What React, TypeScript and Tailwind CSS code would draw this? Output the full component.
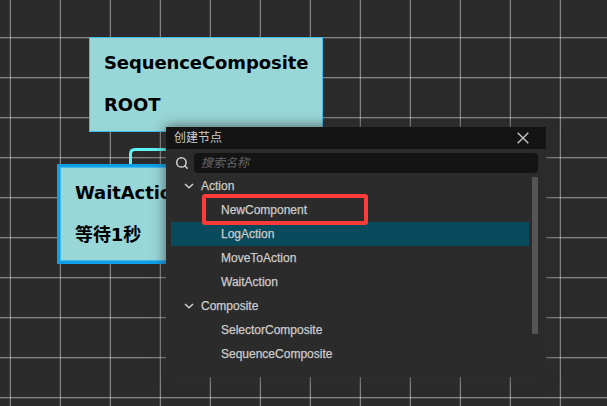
import { Search } from "lucide-react";

type Group = { name: string; items: string[] };

const groups: Group[] = [
  { name: "Action", items: ["NewComponent", "LogAction", "MoveToAction", "WaitAction"] },
  { name: "Composite", items: ["SelectorComposite", "SequenceComposite"] },
];

const nodeFont =
  "font-['DejaVu_Sans','Noto_Sans_CJK_SC',sans-serif] text-[18px] font-bold leading-[42px] tracking-[-0.1px] text-black";

function Grid() {
  return (
    <svg className="absolute inset-0" width="607" height="406" shapeRendering="crispEdges">
      <defs>
        <pattern id="grid" x="9" y="37" width="50" height="40" patternUnits="userSpaceOnUse">
          <rect x="0" y="0" width="1" height="40" fill="#fff" fillOpacity="0.1" />
          <rect x="1" y="0" width="1" height="40" fill="#fff" fillOpacity="0.42" />
          <rect x="0" y="0" width="50" height="1" fill="#fff" fillOpacity="0.42" />
          <rect x="0" y="1" width="50" height="1" fill="#fff" fillOpacity="0.12" />
        </pattern>
      </defs>
      <rect width="607" height="406" fill="url(#grid)" />
    </svg>
  );
}

function Chevron() {
  return (
    <svg width="10" height="6" viewBox="0 0 10 6" fill="none" stroke="#d0d0d0" strokeWidth="1.5">
      <path d="M1 1 L5 4.7 L9 1" />
    </svg>
  );
}

function Row({ name }: { name: string }) {
  return (
    <div className={`flex h-6 items-center pl-[50px] ${name === "LogAction" ? "bg-[#094b5c]" : ""}`}>
      {name}
    </div>
  );
}

function CreateDialog() {
  return (
    <div className="absolute left-[166px] top-[127px] flex h-[250px] w-[380px] flex-col bg-[#2b2b2b] font-['Liberation_Sans','Noto_Sans_CJK_SC',sans-serif] text-xs text-[#cccccc] shadow-[0_0_12px_rgba(50,50,50,0.75)]">
      <div className="flex h-[22px] shrink-0 items-center justify-between bg-[#141414] pl-2 pr-[17px]">
        <span>创建节点</span>
        <svg width="12" height="12" viewBox="0 0 12 12" stroke="#c4c4c4" strokeWidth="1.4">
          <path d="M0.7 0.7 L11.3 11.3 M11.3 0.7 L0.7 11.3" />
        </svg>
      </div>
      <div className="mt-1 flex h-5 shrink-0 items-center gap-[5px] pl-[9px] pr-2">
        <Search size={14} color="#cccccc" strokeWidth={2.7} />
        <div className="flex h-5 flex-1 items-center rounded-sm bg-[#141414] pl-[7px] italic text-[#666666]">
          搜索名称
        </div>
      </div>
      <div className="mt-1 flex pl-[5px] pr-2">
        <div className="-mt-[3px] w-[358px] [-webkit-text-stroke:0.25px_#cccccc]">
          {groups.map((g) => (
            <div key={g.name}>
              <div className="flex h-6 items-center gap-[7px] pl-[13px]">
                <Chevron />
                {g.name}
              </div>
              {g.items.map((i) => (
                <Row key={i} name={i} />
              ))}
            </div>
          ))}
        </div>
        <div className="ml-[3px] h-[157px] w-1.5 rounded-[1px] bg-[#555555]" />
      </div>
    </div>
  );
}

export default function App() {
  return (
    <div className="relative h-[406px] w-[607px] overflow-hidden bg-[#2b2b2b]">
      <Grid />
      <svg className="absolute left-[129px] top-[147px]" width="80" height="18" fill="none">
        <path d="M1.5 18 V7 Q1.5 2.5 6 2.5 H80" stroke="#5ff4f4" strokeWidth="3" />
      </svg>
      <div className={`absolute left-[89px] top-[37px] flex h-[95px] w-[234px] flex-col border border-[#41baf0] bg-[#98d6d8] px-3.5 pt-1 ${nodeFont}`}>
        <div>SequenceComposite</div>
        <div>ROOT</div>
      </div>
      <div className={`absolute left-[57px] top-[164px] flex h-[100px] w-[180px] flex-col border-[3px] border-[#109fe6] bg-[#98d6d8] ${nodeFont}`}>
        <div className="h-full border border-[#41baf0] px-[14px] pt-1">
          <div>WaitAction</div>
          <div>等待1秒</div>
        </div>
      </div>
      <CreateDialog />
      <div className="absolute left-[202px] top-[194px] h-[31px] w-[166px] rounded-[3px] border-4 border-[#ff3a38]" />
    </div>
  );
}
